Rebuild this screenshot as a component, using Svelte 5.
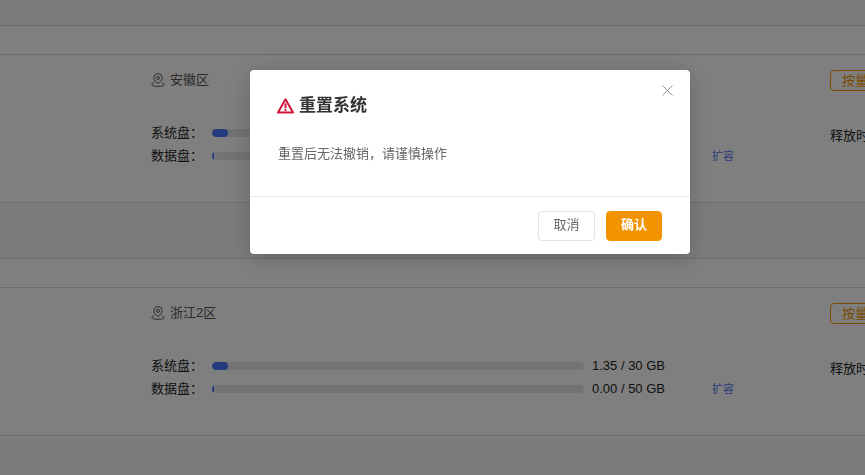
<script>
  const instances = [
    { region: '安徽区', sys: 4.3, sysText: '1.35 / 30 GB', dataText: '0.00 / 50 GB' },
    { region: '浙江2区', sys: 4.3, sysText: '1.35 / 30 GB', dataText: '0.00 / 50 GB' }
  ];
</script>

<div class="page">
  <div class="band top"></div>
  {#each instances as item}
    <div class="caption"></div>
    <section class="card">
      <div class="main">
        <div class="region">
          <svg class="pin" viewBox="0 0 14 14" width="14" height="14" fill="none" stroke="currentColor" stroke-width="1">
            <path d="M7 10.6C4.8 8.8 2.9 7.1 2.9 4.9a4.1 4.1 0 0 1 8.2 0c0 2.2-1.9 3.9-4.1 5.7Z" />
            <circle cx="7" cy="4.9" r="1.5" />
            <path d="M3.2 9.6C1.7 10.1.8 10.8.8 11.6c0 1 2.4 1.7 6.2 1.7s6.2-.7 6.2-1.7c0-.8-.9-1.5-2.4-2" />
          </svg>
          <span>{item.region}</span>
        </div>
        <div class="disks">
          <div class="disk">
            <span class="label">系统盘：</span>
            <div class="track"><div class="fill" style="width:{item.sys}%"></div></div>
            <span class="value">{item.sysText}</span>
          </div>
          <div class="disk">
            <span class="label">数据盘：</span>
            <div class="track"><div class="fill tiny"></div></div>
            <span class="value">{item.dataText}</span>
            <span class="expand">扩容</span>
          </div>
        </div>
      </div>
      <div class="side">
        <span class="tag">按量计费</span>
        <div class="release">释放时间：</div>
      </div>
    </section>
    <div class="band"></div>
  {/each}
</div>

<div class="mask">
  <div class="modal">
    <button class="close" aria-label="关闭">
      <svg viewBox="0 0 11 11" width="11" height="11" fill="none" stroke="currentColor" stroke-width="1"><path d="M.5.5l10 10M10.5.5l-10 10" /></svg>
    </button>
    <div class="modal-body">
      <h2>
        <svg viewBox="0 0 17 16" width="17" height="16" fill="none">
          <path d="M8.5 1.3 1 14.6h15Z" stroke="#d0163a" stroke-width="2" stroke-linejoin="round" />
          <path d="M8.5 5.4v4.8" stroke="#d0163a" stroke-width="2" />
          <circle cx="8.5" cy="12.1" r="1.1" fill="#d0163a" />
        </svg>
        重置系统
      </h2>
      <p>重置后无法撤销，请谨慎操作</p>
    </div>
    <div class="footer">
      <button class="btn">取消</button>
      <button class="btn primary">确认</button>
    </div>
  </div>
</div>

<style>
  :global(body) {
    margin: 0;
    overflow: hidden;
    background: #fff;
    font-family: "Liberation Sans", "Noto Sans CJK SC", sans-serif;
  }
  .page {
    width: 865px;
    height: 475px;
    overflow: hidden;
    color: #333;
    font-size: 13px;
  }
  .band {
    height: 55px;
    background: #f6f8fb;
    border-bottom: 1px solid #d6d9e6;
  }
  .band.top {
    height: 25px;
  }
  .caption {
    height: 28px;
    border-bottom: 1px solid #d6d9e6;
  }
  .card {
    display: flex;
    height: 147px;
    padding-left: 151px;
    border-bottom: 1px solid #d6d9e6;
  }
  .main {
    width: 679px;
    flex: none;
    padding-top: 17px;
    box-sizing: border-box;
  }
  .region {
    display: flex;
    align-items: center;
    gap: 5px;
    height: 16px;
    line-height: 16px;
    color: #555;
  }
  .pin {
    color: #555;
    flex: none;
  }
  .disks {
    display: flex;
    flex-direction: column;
    gap: 3px;
    margin-top: 35px;
  }
  .disk {
    display: flex;
    align-items: center;
    height: 20px;
    line-height: 20px;
    color: #222;
    font-size: 13px;
  }
  .label {
    width: 61px;
    flex: none;
  }
  .track {
    width: 372px;
    height: 8px;
    flex: none;
    border-radius: 4px;
    background: #e5e7eb;
    overflow: hidden;
  }
  .fill {
    height: 100%;
    border-radius: 4px;
    background: #4a76ff;
  }
  .fill.tiny {
    width: 2px;
  }
  .value {
    margin-left: 8px;
    width: 120px;
    flex: none;
    font-size: 13px;
  }
  .expand {
    font-size: 11px;
    color: #5678f0;
  }
  .side {
    flex: none;
    width: 100px;
    padding-top: 15px;
  }
  .tag {
    display: inline-block;
    box-sizing: border-box;
    height: 21px;
    line-height: 19px;
    padding: 0 11px;
    border: 1px solid #f29400;
    border-radius: 4px;
    background: #fff;
    color: #f29400;
    font-size: 13px;
    white-space: nowrap;
  }
  .release {
    margin-top: 34px;
    font-size: 13px;
    color: #222;
    white-space: nowrap;
  }
  .mask {
    position: fixed;
    inset: 0;
    background: rgba(0, 0, 0, 0.5);
    padding: 70px 0 0 250px;
  }
  .modal {
    position: relative;
    width: 440px;
    height: 184px;
    background: #fff;
    border-radius: 4px;
    box-shadow: 0 4px 24px rgba(0, 0, 0, 0.2);
    display: flex;
    flex-direction: column;
  }
  .close {
    position: absolute;
    top: 15px;
    right: 17px;
    padding: 0;
    border: 0;
    background: none;
    color: #909399;
    display: flex;
  }
  .modal-body {
    flex: 1;
    padding: 26px 27px 0 27px;
    border-bottom: 1px solid #e9eaf2;
  }
  h2 {
    margin: 0;
    display: flex;
    align-items: center;
    gap: 5px;
    font-size: 17px;
    line-height: 20px;
    font-weight: 700;
    color: #333;
  }
  p {
    margin: 29px 0 0 1px;
    font-size: 13px;
    line-height: 18px;
    color: #666;
  }
  .footer {
    height: 57px;
    flex: none;
    display: flex;
    justify-content: flex-end;
    align-items: flex-start;
    gap: 11px;
    padding: 14px 28px 0 0;
    box-sizing: border-box;
  }
  .btn {
    height: 30px;
    width: 57px;
    border: 1px solid #dfe1ea;
    border-radius: 4px;
    background: #fff;
    color: #666;
    font: inherit;
    font-size: 13px;
    line-height: 26px;
    padding: 0 0 2px;
  }
  .btn.primary {
    width: 56px;
    background: #f29400;
    border-color: #f29400;
    color: #fff;
    font-weight: 700;
  }
</style>
